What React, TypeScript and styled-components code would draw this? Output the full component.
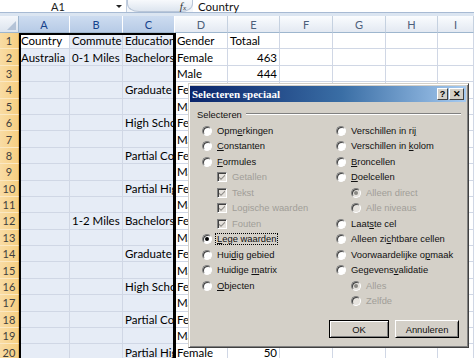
import React from 'react';
import styled, { createGlobalStyle } from 'styled-components';

const Global = createGlobalStyle`
  html, body { margin: 0; padding: 0; background: #ffffff; }
  * { box-sizing: border-box; }
`;

const Page = styled.div`
  position: relative;
  width: 474px;
  height: 358px;
  overflow: hidden;
  background: #dbe5f1;
  font-family: Lato, "Open Sans", sans-serif;
`;

const FormulaBar = styled.div`
  display: flex;
  align-items: stretch;
  height: 13px;
  background: #f3f6fa;
  border-bottom: 1px solid #a7bad3;
  margin-bottom: 3px;
`;

const NameBox = styled.div`
  width: 127px;
  display: flex;
  align-items: center;
  justify-content: space-between;
  padding: 0 4px 0 0;
  font-size: 11px;
  color: #222;
  background: #ffffff;
  border-right: 1px solid #c2cfe0;
`;

const NameText = styled.span`
  flex: 1;
  text-align: center;
  line-height: 13px;
`;

const DropArrow = styled.span`
  width: 0;
  height: 0;
  border-left: 3px solid transparent;
  border-right: 3px solid transparent;
  border-top: 3px solid #222;
`;

const FxPill = styled.div`
  width: 66px;
  display: flex;
  align-items: center;
  justify-content: flex-end;
  padding-right: 6px;
  border: 1px solid #b9c6d8;
  border-top: none;
  border-radius: 0 0 12px 12px / 0 0 8px 8px;
  background: linear-gradient(#f7f9fc, #dde5ef);
  font-family: "Liberation Serif", serif;
  font-style: italic;
  font-size: 11px;
  color: #333;
`;

const FxSub = styled.span`
  font-size: 7px;
  margin-top: 4px;
`;

const FormulaInput = styled.div`
  flex: 1;
  background: #ffffff;
  padding-left: 5px;
  font-size: 11.5px;
  line-height: 13px;
  color: #111;
`;

const SheetWrap = styled.div`
  position: relative;
`;

const Sheet = styled.div`
  display: grid;
  grid-template-columns: 19px 51px 53px 52px 53px 52px 53px 53px 52px 36px;
  grid-template-rows: 17px;
  grid-auto-rows: 16.4px;
  background: #ffffff;
`;

const Corner = styled.div`
  background: linear-gradient(#f4f7fb, #dce4ee);
  border-right: 1px solid #9eb6ce;
  border-bottom: 1px solid #9eb6ce;
  display: flex;
  align-items: flex-end;
  justify-content: flex-end;
  padding: 0 2px 2px 0;
`;

const CornerMark = styled.span`
  width: 0;
  height: 0;
  border-left: 9px solid transparent;
  border-bottom: 9px solid #b4c3d7;
`;

const ColHead = styled.div<{ $sel?: boolean }>`
  display: flex;
  align-items: center;
  justify-content: center;
  font-size: 11px;
  color: ${p => (p.$sel ? '#15428b' : '#4c607a')};
  background: ${p => (p.$sel ? 'linear-gradient(#cddcf0, #b7cbe6)' : 'linear-gradient(#fafcfe, #e3e9f2)')};
  border-right: 1px solid ${p => (p.$sel ? '#ffffff' : '#c5d1e0')};
  border-bottom: 1px solid #9eb6ce;
`;

const RowHead = styled.div`
  display: flex;
  align-items: center;
  justify-content: center;
  font-size: 11px;
  color: #3e3e3e;
  background: linear-gradient(90deg, #f9dca4, #f6cf82);
  border-right: 1px solid #e2b05c;
  border-bottom: 1px solid #fbe8c2;
`;

const Cell = styled.div<{ $sel?: boolean; $num?: boolean }>`
  display: flex;
  align-items: center;
  justify-content: ${p => (p.$num ? 'flex-end' : 'flex-start')};
  padding: 0 2px;
  overflow: hidden;
  white-space: nowrap;
  font-size: 11.5px;
  color: #000;
  background: ${p => (p.$sel ? '#e6ecf6' : '#ffffff')};
  border-right: 1px solid #d0d7e5;
  border-bottom: 1px solid #d0d7e5;
`;

/* thick frame drawn over the selected range A1:C20 */
const SelectionFrame = styled.div`
  position: absolute;
  left: 19px;
  top: 17px;
  width: 157px;
  bottom: -20px;
  border-left: 2px solid #000;
  border-top: 2px solid #000;
  border-right: 3px solid #000;
  pointer-events: none;
`;

/* dialog */

const Dialog = styled.div`
  position: absolute;
  left: 188px;
  top: 83px;
  width: 281px;
  height: 265px;
  z-index: 5;
  background: #d4d0c8;
  border: 1px solid;
  border-color: #d4d0c8 #404040 #404040 #d4d0c8;
  box-shadow: inset 1px 1px #ffffff, inset -1px -1px #808080;
  padding: 1px 2px 2px 1px;
  display: flex;
  flex-direction: column;
  font-family: "Liberation Sans", Arial, sans-serif;
  font-size: 9.4px;
  color: #111;
`;

const TitleBar = styled.div`
  height: 16px;
  margin-top: 1px;
  display: flex;
  align-items: center;
  justify-content: space-between;
  padding: 0 2px 0 2px;
  background: linear-gradient(90deg, #0a246a, #3a6ea5 55%, #a6caf0);
`;

const TitleText = styled.span`
  font-family: "Liberation Serif", "Times New Roman", serif;
  font-weight: bold;
  font-size: 11px;
  color: #ffffff;
`;

const TitleButtons = styled.div`
  display: flex;
  gap: 1px;
`;

const TitleButton = styled.span<{ $w: number }>`
  width: ${p => p.$w}px;
  height: 12px;
  display: flex;
  align-items: center;
  justify-content: center;
  background: #d4d0c8;
  border: 1px solid;
  border-color: #ffffff #404040 #404040 #ffffff;
  font-weight: bold;
  font-size: 9px;
  color: #000;
`;

const Body = styled.div`
  flex: 1;
  display: flex;
  flex-direction: column;
  padding: 6px 5px 7px 7px;
`;

const GroupHead = styled.div`
  display: flex;
  align-items: center;
  gap: 4px;
  height: 12px;
`;

const GroupLabel = styled.span`
  color: #111;
`;

const GroupLine = styled.span`
  flex: 1;
  height: 2px;
  border-top: 1px solid #808080;
  border-bottom: 1px solid #ffffff;
`;

const Options = styled.div`
  display: grid;
  grid-template-columns: 134px 1fr;
  margin: 3px 0 0 5px;
`;

const Column = styled.div`
  display: flex;
  flex-direction: column;
`;

const Option = styled.div<{ $indent?: boolean; $off?: boolean }>`
  height: 15.5px;
  display: flex;
  align-items: center;
  gap: 3px;
  padding-left: ${p => (p.$indent ? 15 : 0)}px;
  color: ${p => (p.$off ? '#a19e98' : '#111')};
`;

const Radio = styled.span<{ $on?: boolean; $off?: boolean }>`
  flex: none;
  width: 10px;
  height: 10px;
  border-radius: 50%;
  border: 1px solid;
  border-color: #808080 #ffffff #ffffff #808080;
  background: ${p => (p.$off ? '#e6e3de' : '#ffffff')};
  box-shadow: inset 1px 1px #404040;
  display: flex;
  align-items: center;
  justify-content: center;
  &::after {
    content: '';
    width: 4px;
    height: 4px;
    border-radius: 50%;
    background: ${p => (p.$off ? '#8a8884' : '#000')};
    display: ${p => (p.$on ? 'block' : 'none')};
  }
`;

const Check = styled.span`
  flex: none;
  width: 10px;
  height: 10px;
  border: 1px solid;
  border-color: #808080 #ffffff #ffffff #808080;
  box-shadow: inset 1px 1px #404040;
  background: #e6e3de;
  display: flex;
  align-items: center;
  justify-content: center;
`;

const Label = styled.span<{ $focus?: boolean }>`
  white-space: nowrap;
  padding: 0 1px;
  border: 1px dotted ${p => (p.$focus ? '#000' : 'transparent')};
  line-height: 10px;
`;

const Footer = styled.div`
  margin-top: auto;
  display: flex;
  justify-content: flex-end;
  gap: 6px;
  padding-right: 2px;
`;

const Button = styled.button<{ $w: number; $default?: boolean }>`
  width: ${p => p.$w}px;
  height: 18px;
  padding: 0;
  font-family: "Liberation Sans", Arial, sans-serif;
  font-size: 9.4px;
  color: #111;
  background: #d4d0c8;
  border: 1px solid ${p => (p.$default ? '#000' : '#ffffff')};
  border-right-color: #000;
  border-bottom-color: #000;
  box-shadow: inset 1px 1px ${p => (p.$default ? '#ffffff' : '#d4d0c8')}, inset -1px -1px #808080;
`;

const CheckMark = () => (
  <svg width="8" height="8" viewBox="0 0 8 8">
    <path d="M1 3.5 L3 5.5 L7 1.5 L7 3 L3 7 L1 5 Z" fill="#8d8b87" />
  </svg>
);

type Opt = {
  label: React.ReactNode;
  kind: 'radio' | 'check';
  on?: boolean;
  off?: boolean;
  indent?: boolean;
  focus?: boolean;
};

const leftOptions: Opt[] = [
  { kind: 'radio', label: <>Opm<u>e</u>rkingen</> },
  { kind: 'radio', label: <><u>C</u>onstanten</> },
  { kind: 'radio', label: <><u>F</u>ormules</> },
  { kind: 'check', label: 'Getallen', on: true, off: true, indent: true },
  { kind: 'check', label: 'Tekst', on: true, off: true, indent: true },
  { kind: 'check', label: 'Logische waarden', on: true, off: true, indent: true },
  { kind: 'check', label: 'Fouten', on: true, off: true, indent: true },
  { kind: 'radio', label: <><u>L</u>ege waarden</>, on: true, focus: true },
  { kind: 'radio', label: <>Hui<u>d</u>ig gebied</> },
  { kind: 'radio', label: <>Huidige <u>m</u>atrix</> },
  { kind: 'radio', label: <><u>O</u>bjecten</> },
];

const rightOptions: Opt[] = [
  { kind: 'radio', label: <>Verschillen in ri<u>j</u></> },
  { kind: 'radio', label: <>Verschillen in <u>k</u>olom</> },
  { kind: 'radio', label: <><u>B</u>roncellen</> },
  { kind: 'radio', label: <><u>D</u>oelcellen</> },
  { kind: 'radio', label: 'Alleen direct', on: true, off: true, indent: true },
  { kind: 'radio', label: 'Alle niveaus', off: true, indent: true },
  { kind: 'radio', label: <>Laat<u>s</u>te cel</> },
  { kind: 'radio', label: <>Alleen zi<u>c</u>htbare cellen</> },
  { kind: 'radio', label: <>Voorwaardelijke o<u>p</u>maak</> },
  { kind: 'radio', label: <>Gegevens<u>v</u>alidatie</> },
  { kind: 'radio', label: 'Alles', on: true, off: true, indent: true },
  { kind: 'radio', label: 'Zelfde', off: true, indent: true },
];

const OptionList = ({ items }: { items: Opt[] }) => (
  <Column>
    {items.map((o, i) => (
      <Option key={i} $indent={o.indent} $off={o.off}>
        {o.kind === 'radio' ? (
          <Radio $on={o.on} $off={o.off} />
        ) : (
          <Check>{o.on && <CheckMark />}</Check>
        )}
        <Label $focus={o.focus}>{o.label}</Label>
      </Option>
    ))}
  </Column>
);

const cols = ['A', 'B', 'C', 'D', 'E', 'F', 'G', 'H', 'I'];
const educ = ['Bachelors', 'Graduate', 'High School', 'Partial College', 'Partial High School'];
const totals = [463, 444, 138, 132, 97, 91, 74, 70, 41, 40, 312, 306, 88, 85, 64, 61, 45, 43, 50];

const rows: string[][] = Array.from({ length: 20 }, (_, i) => {
  const r = i + 1;
  if (r === 1) return ['Country', 'Commute', 'Education', 'Gender', 'Totaal'];
  const a = r === 2 ? 'Australia' : '';
  const b = r === 2 ? '0-1 Miles' : r === 12 ? '1-2 Miles' : '';
  const c = r % 2 === 0 ? educ[((r - 2) / 2) % 5] : '';
  const d = r % 2 === 0 ? 'Female' : 'Male';
  return [a, b, c, d, String(totals[r - 2])];
});

export default function App() {
  return (
    <Page>
      <Global />
      <FormulaBar>
        <NameBox>
          <NameText>A1</NameText>
          <DropArrow />
        </NameBox>
        <FxPill>
          f<FxSub>x</FxSub>
        </FxPill>
        <FormulaInput>Country</FormulaInput>
      </FormulaBar>
      <SheetWrap>
        <Sheet>
          <Corner>
            <CornerMark />
          </Corner>
          {cols.map((c, i) => (
            <ColHead key={c} $sel={i < 3}>{c}</ColHead>
          ))}
          {rows.map((r, ri) => (
            <React.Fragment key={ri}>
              <RowHead>{ri + 1}</RowHead>
              {cols.map((c, ci) => (
                <Cell key={c} $sel={ci < 3 && !(ri === 0 && ci === 0)} $num={ci === 4 && ri > 0}>
                  {r[ci] ?? ''}
                </Cell>
              ))}
            </React.Fragment>
          ))}
        </Sheet>
        <SelectionFrame />
      </SheetWrap>
      <Dialog>
        <TitleBar>
          <TitleText>Selecteren speciaal</TitleText>
          <TitleButtons>
            <TitleButton $w={11}>?</TitleButton>
            <TitleButton $w={15}>✕</TitleButton>
          </TitleButtons>
        </TitleBar>
        <Body>
          <GroupHead>
            <GroupLabel>Selecteren</GroupLabel>
            <GroupLine />
          </GroupHead>
          <Options>
            <OptionList items={leftOptions} />
            <OptionList items={rightOptions} />
          </Options>
          <Footer>
            <Button $w={60} $default>OK</Button>
            <Button $w={64}>Annuleren</Button>
          </Footer>
        </Body>
      </Dialog>
    </Page>
  );
}
